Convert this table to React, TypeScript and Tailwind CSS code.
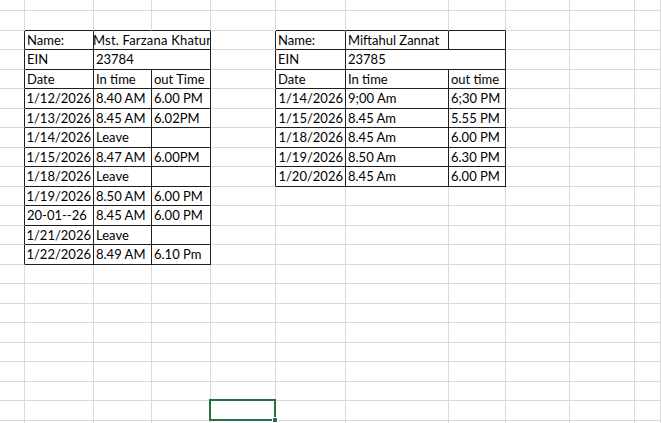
import type { ReactNode } from "react"

type Cell = { v?: string; span?: number; num?: boolean; cls?: string }
type Table = { row: number; col: number; width: number; rows: Cell[][] }

const ROWS = 23
const COLS = 11

const tables: Table[] = [
  {
    row: 2,
    col: 1,
    width: 3,
    rows: [
      [{ v: "Name:" }, { v: "Mst. Farzana Khatun", span: 2, cls: "-ml-[3px] tracking-[0.2px]" }],
      [{ v: "EIN" }, { v: "23784", span: 2 }],
      [{ v: "Date" }, { v: "In time" }, { v: "out Time" }],
      [{ v: "1/12/2026", num: true }, { v: "8.40 AM" }, { v: "6.00 PM" }],
      [{ v: "1/13/2026", num: true }, { v: "8.45 AM" }, { v: "6.02PM" }],
      [{ v: "1/14/2026", num: true }, { v: "Leave" }, {}],
      [{ v: "1/15/2026", num: true }, { v: "8.47 AM" }, { v: "6.00PM" }],
      [{ v: "1/18/2026", num: true }, { v: "Leave" }, {}],
      [{ v: "1/19/2026", num: true }, { v: "8.50 AM" }, { v: "6.00 PM" }],
      [{ v: "20-01--26" }, { v: "8.45 AM" }, { v: "6.00 PM" }],
      [{ v: "1/21/2026", num: true }, { v: "Leave" }, {}],
      [{ v: "1/22/2026", num: true }, { v: "8.49 AM" }, { v: "6.10 Pm" }],
    ],
  },
  {
    row: 2,
    col: 5,
    width: 3,
    rows: [
      [{ v: "Name:" }, { v: "Miftahul Zannat" }, {}],
      [{ v: "EIN" }, { v: "23785", span: 2 }],
      [{ v: "Date" }, { v: "In time" }, { v: "out time" }],
      [{ v: "1/14/2026", num: true }, { v: "9;00 Am" }, { v: "6;30 PM" }],
      [{ v: "1/15/2026", num: true }, { v: "8.45 Am" }, { v: "5.55 PM" }],
      [{ v: "1/18/2026", num: true }, { v: "8.45 Am" }, { v: "6.00 PM" }],
      [{ v: "1/19/2026", num: true }, { v: "8.50 Am" }, { v: "6.30 PM" }],
      [{ v: "1/20/2026", num: true }, { v: "8.45 Am" }, { v: "6.00 PM" }],
    ],
  },
]

function tableAt(r: number, c: number) {
  return tables.find(
    (t) => r >= t.row && r < t.row + t.rows.length && c >= t.col && c < t.col + t.width,
  )
}

// cell that starts exactly at (r, c) inside a table, with its span
function cellAt(t: Table, r: number, c: number): Cell | null {
  let col = t.col
  for (const cell of t.rows[r - t.row]) {
    if (col === c) return cell
    col += cell.span ?? 1
  }
  return null
}

function SheetCell({
  r,
  c,
  cell,
  selected,
}: {
  r: number
  c: number
  cell: Cell
  selected?: boolean
}) {
  const span = cell.span ?? 1
  const inTable = !!tableAt(r, c)
  const darkRight = inTable || !!tableAt(r, c + span)
  const darkBottom = inTable || !!tableAt(r + 1, c)

  return (
    <div
      className={[
        "relative flex items-center whitespace-nowrap border-r border-b pt-px",
        selected ? "z-10" : "overflow-hidden",
        span === 2 ? "col-span-2" : "",
        darkRight ? "border-r-[#1f1f1f]" : "border-r-[#dadada]",
        darkBottom ? "border-b-[#1f1f1f]" : "border-b-[#dadada]",
        cell.num ? "justify-end pr-[2px]" : "justify-start pl-[2px]",
      ].join(" ")}
    >
      {cell.v && <span className={cell.cls}>{cell.v}</span>}
      {selected && <Selection />}
    </div>
  )
}

function Selection() {
  return (
    <div className="absolute -top-[2px] -right-px -bottom-px -left-[2px] border-2 border-[#217346]">
      <div className="absolute -right-[4px] -bottom-[4px] h-[6px] w-[6px] border border-white bg-[#217346]" />
    </div>
  )
}

export default function App() {
  const cells: ReactNode[] = []

  for (let r = 0; r < ROWS; r++) {
    for (let c = 0; c < COLS; c++) {
      const t = tableAt(r, c)
      if (t) {
        const cell = cellAt(t, r, c)
        if (!cell) continue // covered by a merged cell
        cells.push(<SheetCell key={`${r}-${c}`} r={r} c={c} cell={cell} />)
      } else {
        cells.push(
          <SheetCell key={`${r}-${c}`} r={r} c={c} cell={{}} selected={r === 21 && c === 4} />,
        )
      }
    }
  }

  return (
    <div className="h-screen w-full overflow-hidden bg-white">
      <div className="grid grid-cols-[25px_69px_58px_59px_65px_70px_103px_57px_64px_65px_1fr] grid-rows-[11px_repeat(22,19.5px)] font-['Lato',sans-serif] text-[13px] text-black">
        {cells}
      </div>
    </div>
  )
}
